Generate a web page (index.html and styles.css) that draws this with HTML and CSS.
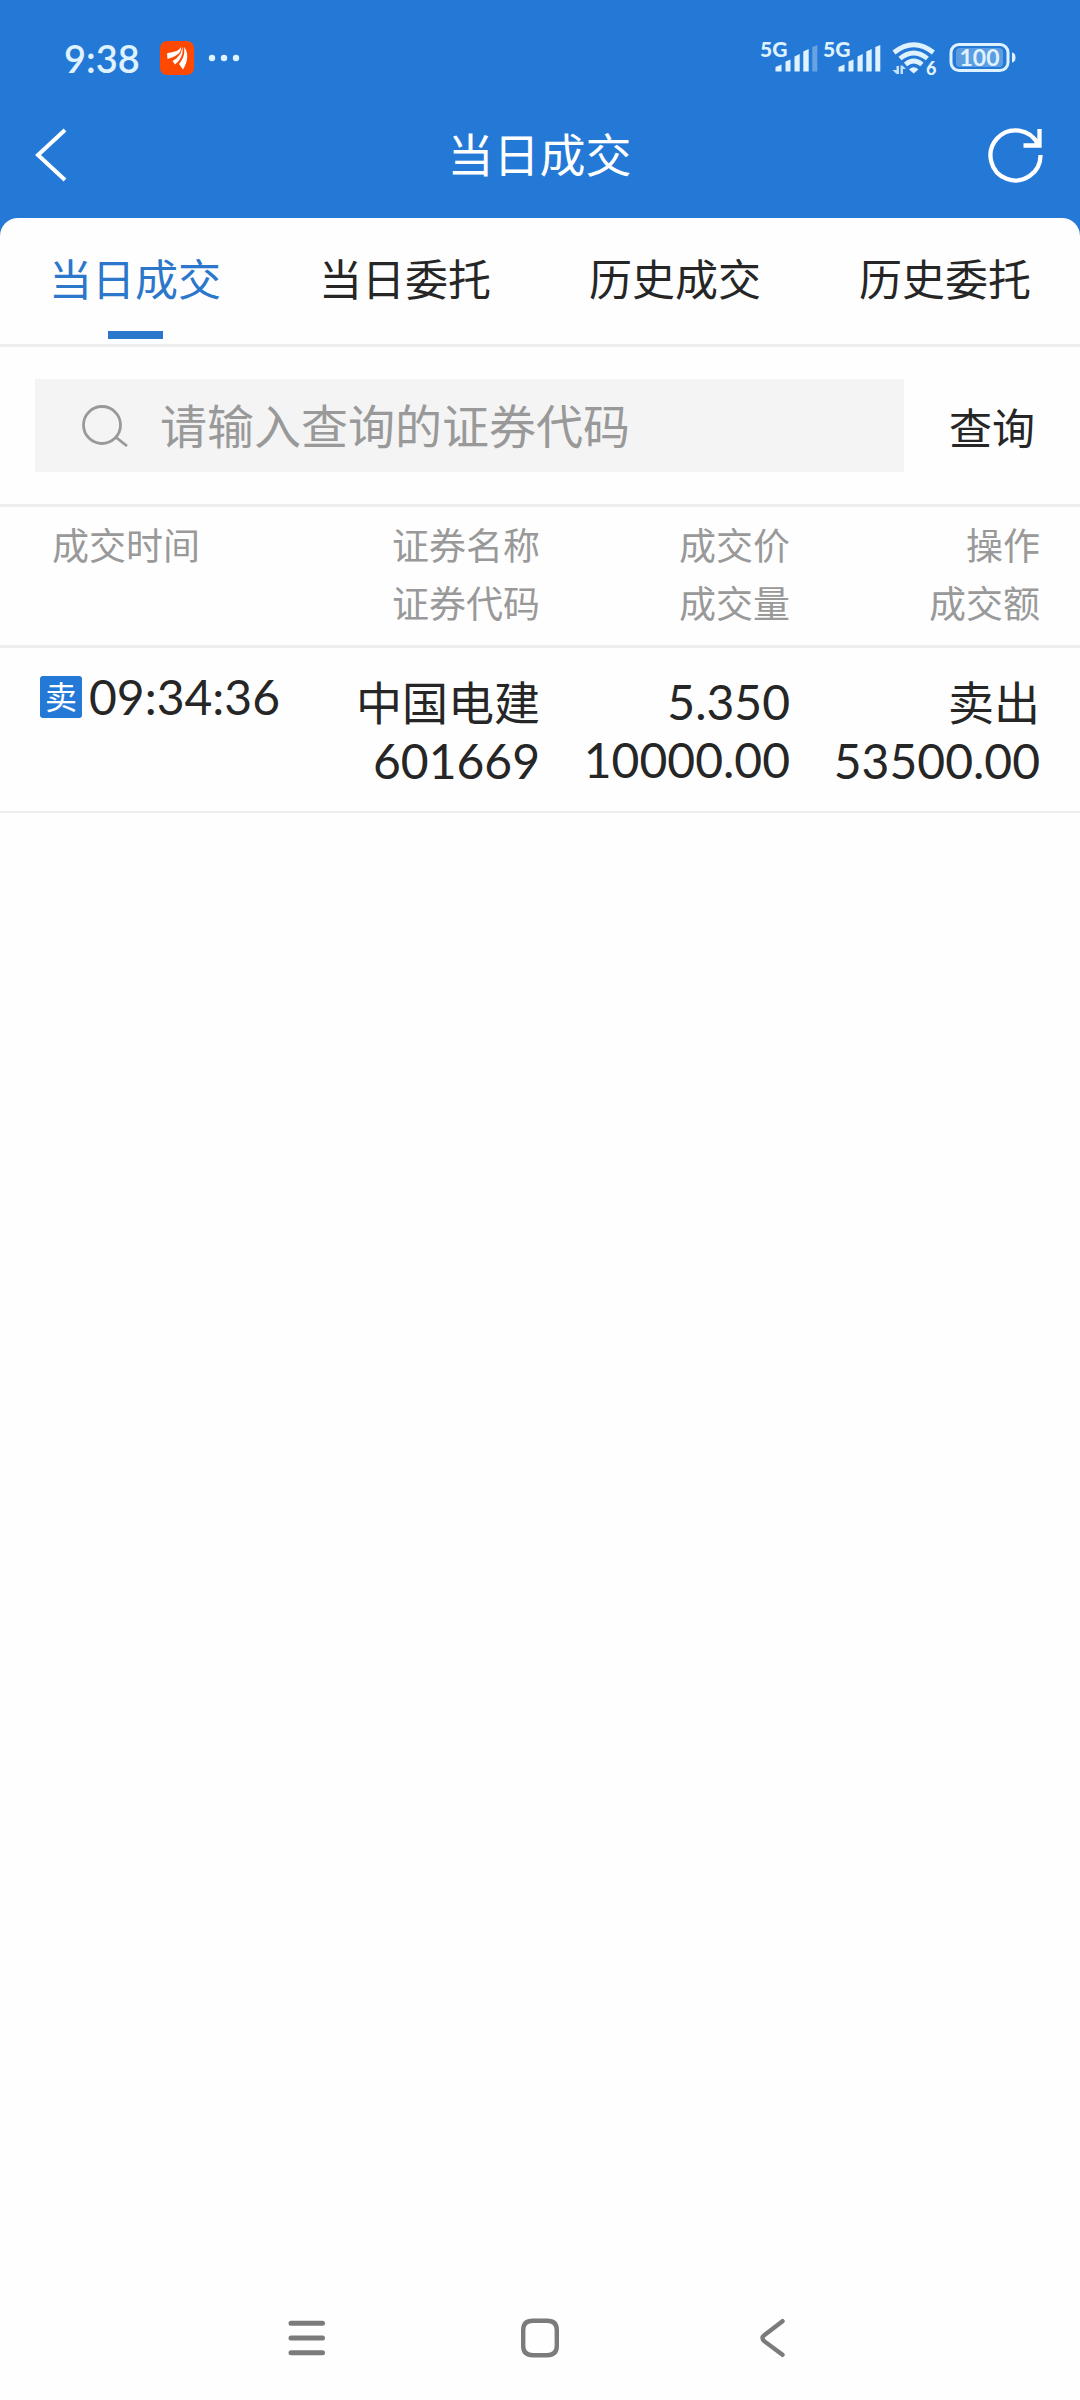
FILE: index.html
```html
<!DOCTYPE html>
<html lang="zh-CN">
<head>
<meta charset="utf-8">
<meta name="viewport" content="width=device-width, initial-scale=1">
<title>当日成交</title>
<link rel="stylesheet" href="styles.css">
</head>
<body>
<div class="app">
  <header class="top">
    <div class="status">
      <span class="clock">9:38</span>
      <svg class="app-badge" width="34" height="34" viewBox="0 0 34 34" aria-hidden="true">
        <rect width="34" height="34" rx="7" fill="#ff4800"/>
        <path d="M7 12.500C12 10.500 18 11.500 21 6C22 12 16 15.500 7.500 18Z" fill="#fff"/>
        <path d="M22.300 5.500C24 12 20.500 19.500 15 23.500L12.500 20C18 17 22 12 22.300 5.500Z" fill="#fff"/>
        <path d="M24 6C28.500 11 28.500 20 23 28.500L19 23C23.500 18 25 12 24 6Z" fill="#fff"/>
      </svg>
      <svg class="dots" width="32" height="8" viewBox="0 0 32 8" fill="#dff2ff" aria-hidden="true">
        <circle cx="4" cy="4" r="3.200"/><circle cx="16" cy="4" r="3.200"/><circle cx="28" cy="4" r="3.200"/>
      </svg>
      <svg class="signals" width="260" height="60" viewBox="-4 -10 260 60" fill="#dff2ff" aria-label="信号与电量">
        <text x="0" y="19" class="net">5G</text>
        <path d="M15.500 33.500V29L21.500 26.500V33.500ZM25.500 33.500V23.500L30.500 21.500V33.500ZM34.500 33.500V18.500L39.700 16V33.500ZM43.300 33.500V13.500L48.700 11V33.500Z"/>
        <path d="M52.300 33.500V9L57.300 7V33.500Z" opacity=".35"/>
        <text x="63" y="19" class="net">5G</text>
        <path d="M78.500 33.500V29L84.500 26.500V33.500ZM88.500 33.500V23.500L93.500 21.500V33.500ZM97.500 33.500V18.500L102.700 16V33.500ZM106.300 33.500V13.500L111.700 11V33.500ZM115.300 33.500V9L120.300 7V33.500Z"/>
        <g fill="none" stroke="#dff2ff" stroke-width="4.800">
          <path d="M134 14.500Q153.700 -1 173.400 14.500"/>
          <path d="M140 20.500Q153.700 9.500 167.400 20.500"/>
          <path d="M145.500 26.500Q153.700 19.500 162 26.500"/>
        </g>
        <path d="M149 31.500Q153.700 27 158.400 31.500L153.700 35.500Z"/>
        <path d="M136.500 28h2.500v8h-2.500l-4-4h4ZM140.500 36h2.500v-5h3l-3.500-3.500h-2Z" opacity=".85"/>
        <text x="166" y="37" class="gen">6</text>
        <rect x="191" y="6.500" width="57" height="26" rx="8" fill="none" stroke="#dff2ff" stroke-width="3"/>
        <rect x="196" y="10" width="47" height="19" rx="4" opacity=".3"/>
        <path d="M252 14.500Q255.500 15 255.500 19.500Q255.500 24 252 24.500Z"/>
        <text x="219.500" y="28" text-anchor="middle" class="charge">100</text>
      </svg>
    </div>
    <div class="bar">
      <button class="icon-btn" aria-label="返回">
        <svg width="32" height="56" viewBox="0 0 32 56" fill="none" stroke="#fff" stroke-width="4"><path d="M30 3L3 28L30 53"/></svg>
      </button>
      <h1 class="title">当日成交</h1>
      <button class="icon-btn" aria-label="刷新">
        <svg width="56" height="56" viewBox="0 0 56 56" fill="none" stroke="#fff" stroke-width="4.300"><path d="M52.500 28A25 25 0 1 1 50 17.500M51.500 2V18.500H35.500"/></svg>
      </button>
    </div>
  </header>

  <main class="panel">
    <nav class="tabs">
      <a class="tab active" href="#" aria-current="page">当日成交</a>
      <a class="tab" href="#">当日委托</a>
      <a class="tab" href="#">历史成交</a>
      <a class="tab" href="#">历史委托</a>
    </nav>

    <form class="search">
      <label class="field">
        <svg width="46" height="42" viewBox="0 0 46 42" fill="none" stroke="#999" stroke-width="2.800"><circle cx="20" cy="20" r="18.500"/><path d="M33.500 32L45 41"/></svg>
        <input type="text" placeholder="请输入查询的证券代码" aria-label="证券代码">
      </label>
      <button class="submit" type="submit">查询</button>
    </form>

    <table class="deals">
      <thead>
        <tr>
          <th scope="col">成交时间</th>
          <th scope="col">证券名称<br>证券代码</th>
          <th scope="col">成交价<br>成交量</th>
          <th scope="col">操作<br>成交额</th>
        </tr>
      </thead>
      <tbody>
        <tr>
          <td><span class="side">卖</span><time>09:34:36</time></td>
          <td><span class="word">中国电建</span><br>601669</td>
          <td>5.350<br>10000.00</td>
          <td><span class="word">卖出</span><br>53500.00</td>
        </tr>
      </tbody>
    </table>
  </main>

  <footer class="sysnav">
    <button aria-label="最近任务"><svg width="40" height="40" viewBox="0 0 40 40" fill="none" stroke="#7b7b7b" stroke-width="5" stroke-linecap="round"><path d="M4 5.300H35.500M4 20H35.500M4 34.700H35.500"/></svg></button>
    <button aria-label="主屏幕"><svg width="40" height="40" viewBox="0 0 40 40" fill="none" stroke="#7b7b7b" stroke-width="4.400"><path d="M20 2.800H27Q36.800 2.800 36.800 12V28Q36.800 37.200 27 37.200H13Q3.200 37.200 3.200 28V12Q3.200 2.800 13 2.800Z"/></svg></button>
    <button aria-label="返回上一页"><svg width="40" height="40" viewBox="0 0 40 40" fill="none" stroke="#7b7b7b" stroke-width="4.400" stroke-linecap="round"><path d="M29.500 3.200L11.500 17Q7.500 20 11.500 23.400L29.500 36.800"/></svg></button>
  </footer>
</div>
</body>
</html>
```
FILE: styles.css
```css
* { box-sizing: border-box; }

body {
  margin: 0;
  background: #fefefe;
  color: #262626;
  font-family: Lato, "Noto Sans CJK SC", sans-serif;
}

button {
  padding: 0;
  border: 0;
  background: none;
  color: inherit;
  font: inherit;
}

svg { display: block; }

.app {
  display: flex;
  flex-direction: column;
  min-height: 100vh;
}

/* header */
.top {
  padding-bottom: 48px;
  background: #2579d6;
  color: #fff;
}

.status {
  display: flex;
  align-items: center;
  height: 116px;
  padding: 0 64px;
  color: #dff2ff;
}

.clock {
  font-size: 38px;
  font-weight: 600;
}

.app-badge { margin-left: 20px; }
.dots { margin-left: 14px; }
.signals { margin-left: auto; }

.net { font-size: 21px; font-weight: 900; }
.gen { font-size: 18px; font-weight: 900; }
.charge { font-size: 23px; font-weight: 700; }

.bar {
  display: flex;
  align-items: center;
  justify-content: space-between;
  height: 78px;
  padding: 0 36px 0 35px;
}

.icon-btn {
  display: flex;
  width: 56px;
}

.title {
  margin: 0;
  font-size: 46px;
  font-weight: 400;
  line-height: 60px;
}

/* content sheet */
.panel {
  flex: 1;
  margin-top: -24px;
  border-radius: 18px 18px 0 0;
  background: #fefefe;
}

.tabs {
  display: grid;
  grid-template-columns: repeat(4, 1fr);
  border-bottom: 3px solid #ededed;
}

.tab {
  display: flex;
  flex-direction: column;
  align-items: center;
  height: 126px;
  padding: 32px 0 5px;
  color: inherit;
  font-size: 43px;
  line-height: 60px;
  text-decoration: none;
}

.active { color: #2b77cc; }

.active::after {
  width: 55px;
  height: 8px;
  margin-top: auto;
  background: #2b77cc;
  content: "";
}

.search {
  display: flex;
  padding: 32px 0 32px 35px;
  border-bottom: 3px solid #ededed;
}

.field {
  display: flex;
  flex: 1;
  align-items: center;
  gap: 32px;
  height: 93px;
  padding-left: 47px;
  background: #f4f4f4;
}

.field input {
  flex: 1;
  min-width: 0;
  height: 90px;
  padding: 0;
  border: 0;
  outline: 0;
  background: none;
  color: inherit;
  font-family: inherit;
  font-size: 47px;
}

.field input::placeholder { color: #999; opacity: 1; }

.submit {
  width: 176px;
  font-size: 43px;
}

/* deals table */
.deals,
.deals thead,
.deals tbody { display: block; }

.deals tr {
  display: grid;
  grid-template-columns: repeat(4, 1fr);
  padding: 0 40px;
}

.deals th,
.deals td {
  padding: 0;
  font-weight: 400;
  line-height: 58px;
  text-align: right;
  white-space: nowrap;
}

.deals thead tr {
  padding-top: 10px;
  padding-bottom: 12px;
  border-bottom: 3px solid #ededed;
}

.deals th {
  color: #999;
  font-size: 37px;
}

.deals th:first-child {
  padding-left: 12px;
  text-align: left;
}

.deals tbody tr {
  padding-top: 25px;
  padding-bottom: 21px;
  border-bottom: 2px solid #ededed;
}

.deals td { font-size: 48px; }

.word { font-size: 46px; }

.deals td:first-child {
  display: flex;
  align-items: center;
  align-self: start;
  gap: 7px;
  height: 48px;
}

.side {
  width: 42px;
  height: 42px;
  border-radius: 3px;
  background: #2579d6;
  color: #fff;
  font-size: 32px;
  line-height: 42px;
  text-align: center;
}

/* system navigation */
.sysnav {
  display: grid;
  grid-template-columns: repeat(3, 1fr);
  height: 124px;
  padding: 0 191px;
}

.sysnav button {
  display: flex;
  align-items: center;
  justify-content: center;
}
```
